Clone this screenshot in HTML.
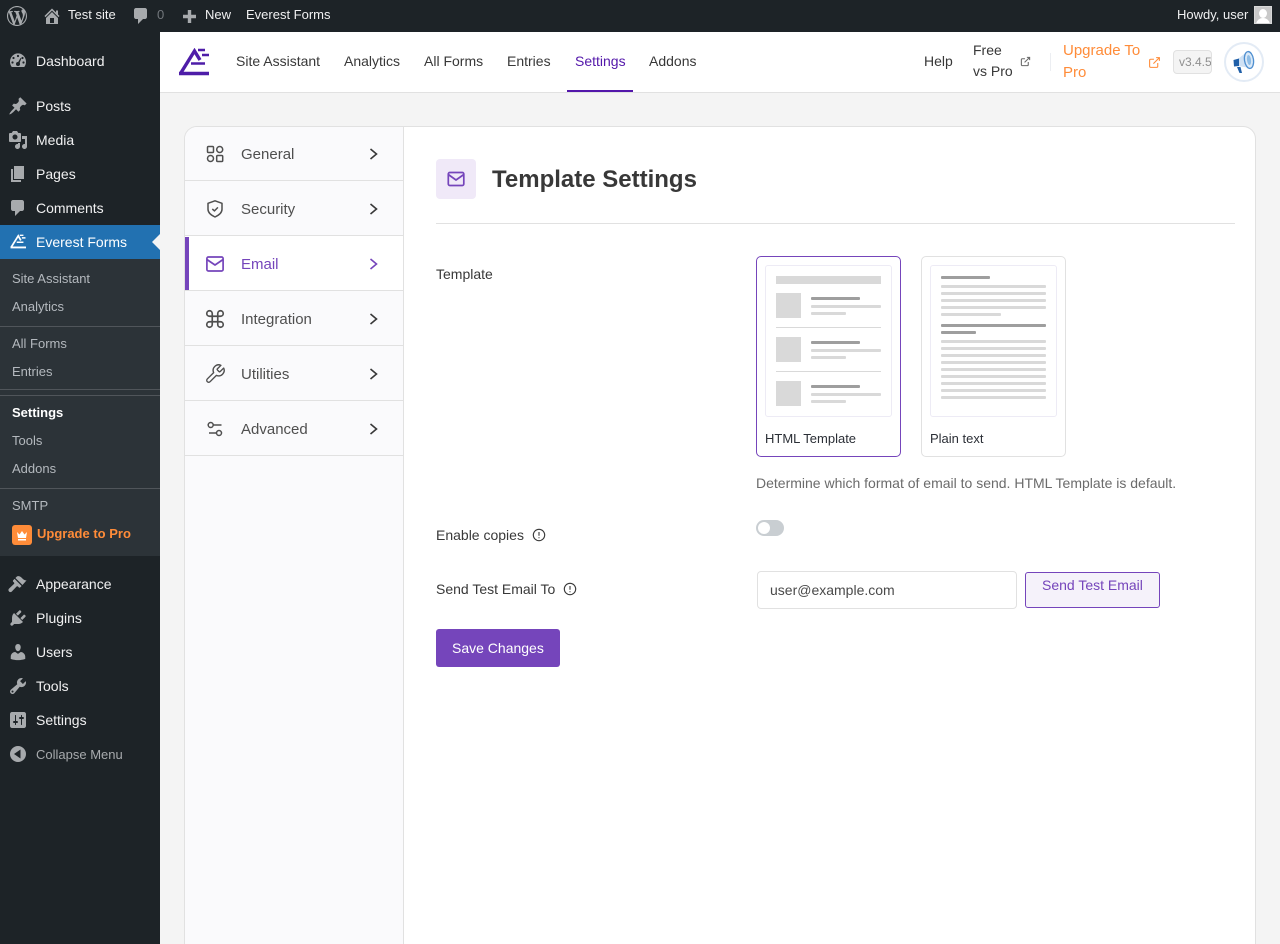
<!DOCTYPE html>
<html><head><meta charset="utf-8"><title>Template Settings</title>
<style>
*{box-sizing:border-box}
html,body{margin:0;padding:0;width:1280px;height:944px;overflow:hidden;background:#f4f4f4;font-family:"Liberation Sans",sans-serif}
#w{position:absolute;left:0;top:0;width:1280px;height:944px;overflow:hidden;background:#f4f4f4}
.a{position:absolute}
.t{position:absolute;white-space:nowrap;line-height:20px;height:20px}
svg{position:absolute;display:block}
.bar{color:#f0f0f1;font-size:13px}
.m{color:#f0f0f1;font-size:14px;left:36px}
.s{color:#b4b9be;font-size:13px;left:12px}
.n{color:#383838;font-size:14px}
.side{color:#4f4f4f;font-size:15px;left:241px}
.l{color:#383838;font-size:14px;left:436px}
.d{position:absolute;background:#9e9e9e;height:3px;border-radius:1px}
.g{position:absolute;background:#d9d9d9;height:3px;border-radius:1px}
.q{position:absolute;background:#d9d9d9;left:776px;width:25px;height:25px}
.hr{position:absolute;left:0;width:160px;height:1px;background:#50555a}
.sb{position:absolute;left:185px;width:218px;height:1px;background:#e1e1e1}
</style></head><body><div id="w">
<!-- admin bar -->
<div class="a" style="left:0;top:0;width:1280px;height:32px;background:#1d2327"></div>
<svg style="left:7px;top:6px" width="20" height="20" viewBox="0 0 20 20" fill="#a7aaad"><path d="M20 10c0-5.510-4.490-10-10-10C4.480 0 0 4.490 0 10c0 5.520 4.480 10 10 10 5.510 0 10-4.480 10-10zM7.780 15.370L4.370 6.220c.55-.02 1.170-.08 1.170-.08.5-.06.44-1.130-.06-1.110 0 0-1.450.11-2.370.11-.18 0-.37 0-.58-.01C4.120 2.690 6.870 1.110 10 1.110c2.330 0 4.450.87 6.050 2.340-.68-.11-1.650.39-1.650 1.580 0 .74.45 1.360.9 2.100.35.61.55 1.360.55 2.460 0 1.490-1.400 5-1.400 5l-3.030-8.370c.54-.02.82-.17.82-.17.5-.05.44-1.250-.06-1.220 0 0-1.440.12-2.380.12-.87 0-2.330-.12-2.330-.12-.5-.03-.56 1.200-.06 1.220l.92.08 1.260 3.410zM17.410 10c.24-.64.74-1.870.43-4.250.7 1.290 1.050 2.710 1.050 4.250 0 3.290-1.730 6.240-4.400 7.780.97-2.590 1.940-5.200 2.920-7.780zM6.100 18.090C3.120 16.650 1.110 13.530 1.110 10c0-1.300.23-2.480.72-3.590C3.250 10.300 4.670 14.200 6.100 18.090zm4.030-6.630l2.580 6.980c-.86.29-1.760.45-2.710.45-.79 0-1.570-.11-2.300-.33.810-2.380 1.620-4.740 2.430-7.100z"/></svg>
<svg style="left:42px;top:6px" width="20" height="20" viewBox="0 0 20 20" fill="#a7aaad"><path d="M16 8.500l1.530 1.530-1.060 1.060L10 4.620l-6.470 6.470-1.060-1.060L10 2.500l4 4v-2h2v4zm-6-2.460l6 5.990V18H4v-5.970zM12 17v-5H8v5h4z"/></svg>
<span class="t bar" style="left:68px;top:5px">Test site</span>
<svg style="left:131px;top:6px" width="20" height="20" viewBox="0 0 20 20" fill="#a7aaad"><path d="M5 2h9c1.100 0 2 .9 2 2v7c0 1.100-.9 2-2 2h-2l-5 5v-5H5c-1.100 0-2-.9-2-2V4c0-1.100.9-2 2-2z"/></svg>
<span class="t bar" style="left:157px;top:5px;color:#72777c">0</span>
<svg style="left:180px;top:6px" width="20" height="20" viewBox="0 0 20 20" fill="#a7aaad"><path d="M7.800 4h3.400v4.800H16v3.400h-4.800V17H7.800v-4.800H3V8.800h4.800z"/></svg>
<span class="t bar" style="left:205px;top:5px">New</span>
<span class="t bar" style="left:246px;top:5px">Everest Forms</span>
<span class="t bar" style="left:1177px;top:5px">Howdy, user</span>
<div class="a" style="left:1254px;top:6px;width:18px;height:18px;background:#c9c9c9;overflow:hidden;border:1px solid #d8d8d8">
<div class="a" style="left:4px;top:2px;width:8px;height:9px;border-radius:50%;background:#fff"></div>
<div class="a" style="left:1px;top:11px;width:14px;height:8px;border-radius:7px 7px 0 0;background:#fff"></div></div>
<!-- sidebar -->
<div class="a" style="left:0;top:32px;width:160px;height:912px;background:#1d2327"></div>
<svg style="left:8px;top:51px" width="20" height="20" viewBox="0 0 20 20" fill="#a7aaad"><path d="M3.760 16h12.480c1.100-1.430 1.760-3.210 1.760-5.140 0-4.700-3.580-8.510-8-8.510s-8 3.810-8 8.510c0 1.930.66 3.710 1.760 5.140z"/><g fill="#1d2327"><circle cx="10" cy="5" r="1.100"/><circle cx="5.500" cy="7" r="1.100"/><circle cx="4.500" cy="11.500" r="1.100"/><circle cx="15.500" cy="11.500" r="1.100"/><circle cx="14.500" cy="7" r="1.100"/><circle cx="10" cy="13" r="2"/><path d="M9 13l3.500-6 .8.5L11 13.500z"/></g></svg>
<span class="t m" style="top:51px">Dashboard</span>
<svg style="left:8px;top:96px" width="20" height="20" viewBox="0 0 20 20" fill="#a7aaad"><path d="M10.440 3.020l1.820-1.820 6.360 6.350-1.830 1.820c-1.050-.68-2.480-.57-3.410.36l-.75.75c-.92.93-1.040 2.350-.35 3.410l-1.830 1.820-2.410-2.410-2.800 2.790c-.42.42-3.380 2.710-3.800 2.290s1.860-3.390 2.280-3.810l2.790-2.790L4.100 9.360l1.830-1.820c1.050.69 2.480.57 3.400-.36l.75-.75c.93-.92 1.050-2.350.36-3.410z"/></svg>
<span class="t m" style="top:96px">Posts</span>
<svg style="left:8px;top:130px" width="20" height="20" viewBox="0 0 20 20" fill="#a7aaad"><path fill-rule="evenodd" d="M13 11V4c0-.55-.45-1-1-1h-1.670L9 1H5L3.670 3H2c-.55 0-1 .45-1 1v7c0 .55.45 1 1 1h10c.55 0 1-.45 1-1zM7 4.500c1.380 0 2.500 1.120 2.500 2.500S8.380 9.500 7 9.500 4.500 8.380 4.500 7 5.620 4.500 7 4.500zM14 6h5v10.500c0 1.380-1.120 2.500-2.500 2.500S14 17.880 14 16.500s1.120-2.500 2.500-2.500c.17 0 .34.020.5.050V9h-3V6zm-4 8.050V13h2v3.500c0 1.380-1.120 2.500-2.500 2.500S7 17.880 7 16.500 8.120 14 9.500 14c.17 0 .34.020.5.050z"/></svg>
<span class="t m" style="top:130px">Media</span>
<svg style="left:8px;top:164px" width="20" height="20" viewBox="0 0 20 20" fill="#a7aaad"><path d="M6 15V2h10v13H6zm-1 1h8v2H3V5h2v11z"/></svg>
<span class="t m" style="top:164px">Pages</span>
<svg style="left:8px;top:198px" width="20" height="20" viewBox="0 0 20 20" fill="#a7aaad"><path d="M5 2h9c1.100 0 2 .9 2 2v7c0 1.100-.9 2-2 2h-2l-5 5v-5H5c-1.100 0-2-.9-2-2V4c0-1.100.9-2 2-2z"/></svg>
<span class="t m" style="top:198px">Comments</span>
<div class="a" style="left:0;top:225px;width:160px;height:34px;background:#2271b1"></div>
<svg style="left:10px;top:234px" width="16" height="15" viewBox="0 0 31 28" fill="none" stroke="#fff" stroke-width="3.400"><path d="M1 25.500H31M2 25.500L16 3 21 12"/><path d="M19 2h7M23 7h7M13 15.500h13" stroke-width="2.800"/></svg>
<span class="t m" style="top:232px;color:#fff">Everest Forms</span>
<div class="a" style="left:152px;top:234px;width:0;height:0;border-top:8px solid transparent;border-bottom:8px solid transparent;border-right:8px solid #f4f4f4"></div>
<div class="a" style="left:0;top:259px;width:160px;height:297px;background:#2c3338"></div>
<span class="t s" style="top:269px">Site Assistant</span>
<span class="t s" style="top:297px">Analytics</span>
<div class="hr" style="top:326px"></div>
<span class="t s" style="top:334px">All Forms</span>
<span class="t s" style="top:362px">Entries</span>
<div class="hr" style="top:389px"></div>
<div class="hr" style="top:395px"></div>
<span class="t s" style="top:403px;color:#fff;font-weight:bold">Settings</span>
<span class="t s" style="top:431px">Tools</span>
<span class="t s" style="top:459px">Addons</span>
<div class="hr" style="top:488px"></div>
<span class="t s" style="top:496px">SMTP</span>
<div class="a" style="left:12px;top:525px;width:20px;height:20px;background:#ff8c39;border-radius:3px"></div>
<svg style="left:12px;top:525px" width="20" height="20" viewBox="0 0 20 20" fill="#fff"><path d="M5 7l2.500 2.500L10 6l2.500 3.500L15 7l-1 6H6zM6 14h8v1.500H6z"/></svg>
<span class="t s" style="top:524px;left:37px;color:#ff8c39;font-weight:bold">Upgrade to Pro</span>
<svg style="left:8px;top:574px" width="20" height="20" viewBox="0 0 20 20" fill="#a7aaad"><path d="M14.480 11.060L7.410 3.990l1.500-1.500c.5-.56 2.300-.47 3.510.32 1.210.8 1.430 1.280 2.660 2.300 1.210 1.010 2.210 1.250 3.480 1.250l-4.080 4.700zM13.600 11.940l-1.400 1.400c-.39.39-1.030.39-1.410 0L10 12.500c-.4-.4-1.030-.4-1.410 0l-4.750 5c-.78.78-2.050.78-2.830 0-.78-.78-.78-2.050 0-2.830l5-4.750c.39-.4.39-1.030 0-1.410L5.200 7.700c-.39-.39-.39-1.030 0-1.410l1.400-1.400z"/></svg>
<span class="t m" style="top:574px">Appearance</span>
<svg style="left:8px;top:608px" width="20" height="20" viewBox="0 0 20 20" fill="#a7aaad"><path d="M13.110 4.360L9.870 7.600 8 5.730l3.240-3.240c.35-.34 1.050-.2 1.560.32.520.51.660 1.210.310 1.550zm-8 1.770l.91-1.120 9.010 9.010-1.190.84c-.71.710-2.630 1.160-3.820 1.160H6.140L4.900 17.260c-.59.59-1.540.59-2.120 0-.59-.58-.59-1.530 0-2.120l1.240-1.240v-3.880c0-1.130.4-3.190 1.090-3.890zm7.260 3.970l3.240-3.240c.34-.35 1.040-.21 1.550.31.520.51.660 1.210.310 1.560l-3.240 3.240z"/></svg>
<span class="t m" style="top:608px">Plugins</span>
<svg style="left:8px;top:642px" width="20" height="20" viewBox="0 0 20 20" fill="#a7aaad"><path d="M10 9.250c-2.270 0-2.730-3.440-2.730-3.440C7 4.020 7.820 2 9.970 2c2.160 0 2.980 2.020 2.710 3.810 0 0-.41 3.440-2.680 3.440zm0 2.570L12.720 10c2.390 0 4.520 2.330 4.520 4.530v2.490s-3.650 1.130-7.240 1.130c-3.650 0-7.240-1.130-7.240-1.130v-2.490c0-2.250 1.940-4.480 4.470-4.480z"/></svg>
<span class="t m" style="top:642px">Users</span>
<svg style="left:8px;top:676px" width="20" height="20" viewBox="0 0 20 20" fill="#a7aaad"><path fill-rule="evenodd" d="M16.680 9.770c-1.340 1.340-3.300 1.670-4.950.99l-5.410 6.520c-.99.99-2.590.99-3.570 0-.99-.98-.99-2.580 0-3.570l6.520-5.420c-.68-1.650-.35-3.610.99-4.950 1.280-1.280 3.120-1.620 4.720-1.060l-2.890 2.890 2.820 2.820 2.860-2.870c.53 1.580.18 3.390-1.090 4.670zM3.810 16.210c.4.390 1.040.39 1.430 0 .4-.4.400-1.040 0-1.430-.39-.4-1.030-.4-1.430 0-.39.39-.39 1.030 0 1.430z"/></svg>
<span class="t m" style="top:676px">Tools</span>
<svg style="left:8px;top:710px" width="20" height="20" viewBox="0 0 20 20" fill="#a7aaad"><path fill-rule="evenodd" d="M18 16V4c0-1.100-.9-2-2-2H4c-1.100 0-2 .9-2 2v12c0 1.100.9 2 2 2h12c1.100 0 2-.9 2-2zM8 11h1c.55 0 1 .45 1 1s-.45 1-1 1H8v1.500c0 .28-.22.5-.5.5s-.5-.22-.5-.5V13H6c-.55 0-1-.45-1-1s.45-1 1-1h1V5.500c0-.28.22-.5.5-.5s.5.22.5.5V11zm5-2h-1c-.55 0-1-.45-1-1s.45-1 1-1h1V5.500c0-.28.22-.5.5-.5s.5.22.5.5V7h1c.55 0 1 .45 1 1s-.45 1-1 1h-1v5.500c0 .28-.22.5-.5.5s-.5-.22-.5-.5V9z"/></svg>
<span class="t m" style="top:710px">Settings</span>
<svg style="left:8px;top:744px" width="20" height="20" viewBox="0 0 20 20" fill="#a7aaad"><path fill-rule="evenodd" d="M10 2a8 8 0 1 0 0 16 8 8 0 0 0 0-16zM12.500 14.500L6 10l6.500-4.500z"/></svg>
<span class="t m" style="top:745px;font-size:13px;color:#a7aaad">Collapse Menu</span>
<!-- header -->
<div class="a" style="left:160px;top:32px;width:1120px;height:61px;background:#fff;border-bottom:1px solid #e1e1e1"></div>
<svg style="left:179px;top:48px" width="31" height="28" viewBox="0 0 31 28" fill="none" stroke="#4e1da8" stroke-width="3.400"><path d="M0 25.500H30M1.500 25.500L15.500 3 21 12"/><path d="M19 2h7M23 7h7M12 15.500h14" stroke-width="2.600"/></svg>
<span class="t n" style="left:236px;top:51px">Site Assistant</span>
<span class="t n" style="left:344px;top:51px">Analytics</span>
<span class="t n" style="left:424px;top:51px">All Forms</span>
<span class="t n" style="left:507px;top:51px">Entries</span>
<span class="t n" style="left:575px;top:51px;color:#5317aa">Settings</span>
<div class="a" style="left:567px;top:90px;width:66px;height:2px;background:#5317aa"></div>
<span class="t n" style="left:649px;top:51px">Addons</span>
<span class="t n" style="left:924px;top:51px">Help</span>
<span class="t n" style="left:973px;top:40px">Free</span>
<span class="t n" style="left:973px;top:61px">vs Pro</span>
<svg style="left:1020px;top:56px" width="11" height="11" viewBox="0 0 24 24" fill="none" stroke="#6b6b6b" stroke-width="2.400"><path d="M18 13v6a2 2 0 0 1-2 2H5a2 2 0 0 1-2-2V8a2 2 0 0 1 2-2h6M15 3h6v6M10 14L21 3"/></svg>
<div class="a" style="left:1050px;top:53px;width:1px;height:18px;background:#eceef2"></div>
<span class="t" style="left:1063px;top:41px;font-size:15px;color:#ff8c39">Upgrade To</span>
<span class="t" style="left:1063px;top:63px;font-size:15px;color:#ff8c39">Pro</span>
<svg style="left:1148px;top:56px" width="13" height="13" viewBox="0 0 24 24" fill="none" stroke="#ff8c39" stroke-width="2"><path d="M18 13v6a2 2 0 0 1-2 2H5a2 2 0 0 1-2-2V8a2 2 0 0 1 2-2h6M15 3h6v6M10 14L21 3"/></svg>
<div class="a" style="left:1173px;top:50px;width:39px;height:24px;background:#f4f4f4;border:1px solid #e1e1e1;border-radius:4px;overflow:hidden;color:#8f8f8f;font-size:12px;line-height:22px;padding-left:5px;white-space:nowrap">v3.4.5</div>
<div class="a" style="left:1224px;top:42px;width:40px;height:40px;border-radius:50%;background:#fff;border:2px solid #e3ebf5"></div>
<svg style="left:1232px;top:50px" width="24" height="24" viewBox="0 0 24 24"><path d="M14 2.500L6 9v7l12 2z" fill="#cfe1f4"/><path d="M1.500 10L7 8.500V16l-5 .5z" fill="#1f5fa8"/><path d="M5 17l3.500 0L10 23l-2.500 0z" fill="#1f5fa8"/><ellipse cx="17" cy="10" rx="4.500" ry="8.500" fill="#dbe9f7" stroke="#4f8fd0" stroke-width="1.300" transform="rotate(-8 17 10)"/><ellipse cx="17" cy="10" rx="2" ry="5" fill="#8fbde6" transform="rotate(-8 17 10)"/></svg>
<!-- panel -->
<div class="a" style="left:184px;top:126px;width:1072px;height:860px;background:#fff;border:1px solid #e1e1e1;border-radius:13px;overflow:hidden">
<div class="a" style="left:0;top:0;width:218px;height:860px;background:#fafafc"></div>
<div class="a" style="left:218px;top:0;width:1px;height:860px;background:#e1e1e1"></div>
</div>
<div class="a" style="left:185px;top:236px;width:218px;height:54px;background:#fff"></div>
<div class="a" style="left:185px;top:237px;width:4px;height:53px;background:#7545bb"></div>
<div class="sb" style="top:180px"></div><div class="sb" style="top:235px"></div><div class="sb" style="top:290px"></div><div class="sb" style="top:345px"></div><div class="sb" style="top:400px"></div><div class="sb" style="top:455px"></div>
<svg style="left:205px;top:144px" width="20" height="20" viewBox="0 0 20 20" fill="none" stroke="#4f4f4f" stroke-width="1.500"><rect x="2.500" y="2.500" width="6" height="6" rx="1"/><circle cx="14.700" cy="5.500" r="3"/><circle cx="5.500" cy="14.500" r="3"/><rect x="11.700" y="11.500" width="6" height="6" rx="1"/></svg>
<span class="t side" style="top:145px">General</span>
<svg style="left:205px;top:199px" width="20" height="20" viewBox="0 0 20 20" fill="none" stroke="#4f4f4f" stroke-width="1.500" stroke-linejoin="round"><path d="M10 1.800l7 2.500v6c0 3.500-3.200 6-7 7.700-3.800-1.700-7-4.200-7-7.700v-6z"/><path d="M7.300 10l2.200 1.900 3.400-3.500"/></svg>
<span class="t side" style="top:200px">Security</span>
<svg style="left:205px;top:254px" width="20" height="20" viewBox="0 0 20 20" fill="none" stroke="#7545bb" stroke-width="1.700" stroke-linejoin="round"><rect x="1.900" y="3" width="16.200" height="14" rx="1.500"/><path d="M1.900 5.500L10 11l8.100-5.500"/></svg>
<span class="t side" style="top:255px;color:#7545bb">Email</span>
<svg style="left:204px;top:308px" width="22" height="22" viewBox="0 0 24 24" fill="none" stroke="#4f4f4f" stroke-width="1.800"><path d="M15 6v12a3 3 0 1 0 3-3H6a3 3 0 1 0 3 3V6a3 3 0 1 0-3 3h12a3 3 0 1 0-3-3"/></svg>
<span class="t side" style="top:310px">Integration</span>
<svg style="left:204px;top:363px" width="22" height="22" viewBox="0 0 24 24" fill="none" stroke="#4f4f4f" stroke-width="1.500" stroke-linejoin="round"><path d="M14.700 6.300a1 1 0 0 0 0 1.400l1.600 1.600a1 1 0 0 0 1.400 0l3.770-3.770a6 6 0 0 1-7.940 7.940l-6.910 6.910a2.120 2.120 0 0 1-3-3l6.910-6.910a6 6 0 0 1 7.940-7.940l-3.760 3.760z"/></svg>
<span class="t side" style="top:365px">Utilities</span>
<svg style="left:205px;top:419px" width="20" height="20" viewBox="0 0 20 20" fill="none" stroke="#4f4f4f" stroke-width="1.500"><circle cx="5.700" cy="6" r="2.500"/><path d="M8.500 6h8M4 14h7"/><circle cx="14" cy="14" r="2.500"/></svg>
<span class="t side" style="top:420px">Advanced</span>
<svg style="left:365px;top:146px" width="16" height="320" viewBox="0 0 16 320" fill="none" stroke="#383838" stroke-width="1.600"><path d="M5.500 3l6 5-6 5"/><path d="M5.500 58l6 5-6 5"/><path d="M5.500 113l6 5-6 5" stroke="#7545bb"/><path d="M5.500 168l6 5-6 5"/><path d="M5.500 223l6 5-6 5"/><path d="M5.500 278l6 5-6 5"/></svg>
<!-- content -->
<div class="a" style="left:436px;top:159px;width:40px;height:40px;background:#f0e9f8;border-radius:4px"></div>
<svg style="left:446px;top:169px" width="20" height="20" viewBox="0 0 20 20" fill="none" stroke="#7545bb" stroke-width="1.700" stroke-linejoin="round"><rect x="2.300" y="3.500" width="15.500" height="13" rx="1.500"/><path d="M2.300 5.500l7.700 5.500 7.800-5.500"/></svg>
<span class="t" style="left:492px;top:165px;font-size:24px;font-weight:bold;color:#383838;line-height:30px;height:30px">Template Settings</span>
<div class="a" style="left:436px;top:223px;width:799px;height:1px;background:#e1e1e1"></div>
<span class="t l" style="top:264px">Template</span>
<!-- html card -->
<div class="a" style="left:756px;top:256px;width:145px;height:201px;border:1px solid #7545bb;border-radius:5px;background:#fff"></div>
<div class="a" style="left:765px;top:265px;width:127px;height:152px;border:1px solid #edebf5;border-radius:3px;background:#fff"></div>
<div class="a" style="left:776px;top:276px;width:105px;height:8px;background:#d9d9d9"></div>
<div class="q" style="top:293px"></div><div class="q" style="top:337px"></div><div class="q" style="top:381px"></div>
<div class="d" style="left:811px;top:297px;width:49px"></div><div class="g" style="left:811px;top:305px;width:70px"></div><div class="g" style="left:811px;top:312px;width:35px"></div>
<div class="a" style="left:776px;top:327px;width:105px;height:1px;background:#d9d9d9"></div>
<div class="d" style="left:811px;top:341px;width:49px"></div><div class="g" style="left:811px;top:349px;width:70px"></div><div class="g" style="left:811px;top:356px;width:35px"></div>
<div class="a" style="left:776px;top:371px;width:105px;height:1px;background:#d9d9d9"></div>
<div class="d" style="left:811px;top:385px;width:49px"></div><div class="g" style="left:811px;top:393px;width:70px"></div><div class="g" style="left:811px;top:400px;width:35px"></div>
<span class="t" style="left:765px;top:429px;font-size:13px;color:#2b2f36">HTML Template</span>
<!-- plain card -->
<div class="a" style="left:921px;top:256px;width:145px;height:201px;border:1px solid #e1e1e1;border-radius:5px;background:#fff"></div>
<div class="a" style="left:930px;top:265px;width:127px;height:152px;border:1px solid #edebf5;border-radius:3px;background:#fff"></div>
<div class="d" style="left:941px;top:276px;width:49px"></div>
<div class="g" style="left:941px;top:285px;width:105px"></div><div class="g" style="left:941px;top:292px;width:105px"></div><div class="g" style="left:941px;top:299px;width:105px"></div><div class="g" style="left:941px;top:306px;width:105px"></div><div class="g" style="left:941px;top:313px;width:60px"></div>
<div class="d" style="left:941px;top:324px;width:105px"></div><div class="d" style="left:941px;top:331px;width:35px"></div>
<div class="g" style="left:941px;top:340px;width:105px"></div><div class="g" style="left:941px;top:347px;width:105px"></div><div class="g" style="left:941px;top:354px;width:105px"></div><div class="g" style="left:941px;top:361px;width:105px"></div><div class="g" style="left:941px;top:368px;width:105px"></div><div class="g" style="left:941px;top:375px;width:105px"></div><div class="g" style="left:941px;top:382px;width:105px"></div><div class="g" style="left:941px;top:389px;width:105px"></div><div class="g" style="left:941px;top:396px;width:105px"></div>
<span class="t" style="left:930px;top:429px;font-size:13px;color:#2b2f36">Plain text</span>
<span class="t" style="left:756px;top:473px;font-size:14px;color:#6b6b6b">Determine which format of email to send. HTML Template is default.</span>
<span class="t l" style="top:525px">Enable copies</span>
<svg style="left:532px;top:528px" width="14" height="14" viewBox="0 0 14 14" fill="none" stroke="#383838" stroke-width="1.100"><circle cx="7" cy="7" r="5.700"/><path d="M7 4v3.800M7 9.200v1"/></svg>
<div class="a" style="left:756px;top:520px;width:28px;height:16px;border-radius:8px;background:#c9ced2"></div>
<div class="a" style="left:758px;top:522px;width:12px;height:12px;border-radius:50%;background:#fff"></div>
<span class="t l" style="top:579px">Send Test Email To</span>
<svg style="left:563px;top:582px" width="14" height="14" viewBox="0 0 14 14" fill="none" stroke="#383838" stroke-width="1.100"><circle cx="7" cy="7" r="5.700"/><path d="M7 4v3.800M7 9.200v1"/></svg>
<div class="a" style="left:757px;top:571px;width:260px;height:38px;border:1px solid #e1e1e1;border-radius:4px;background:#fff"></div>
<span class="t" style="left:770px;top:580px;font-size:14px;color:#4a4a4a">user@example.com</span>
<div class="a" style="left:1025px;top:572px;width:135px;height:36px;border:1px solid #7545bb;border-radius:3px;background:#f5f2fa"></div>
<span class="t" style="left:1042px;top:575px;font-size:14px;color:#7545bb">Send Test Email</span>
<div class="a" style="left:436px;top:629px;width:124px;height:38px;background:#7545bb;border-radius:3px"></div>
<span class="t" style="left:452px;top:638px;font-size:14px;color:#fff">Save Changes</span>
</div></body></html>
